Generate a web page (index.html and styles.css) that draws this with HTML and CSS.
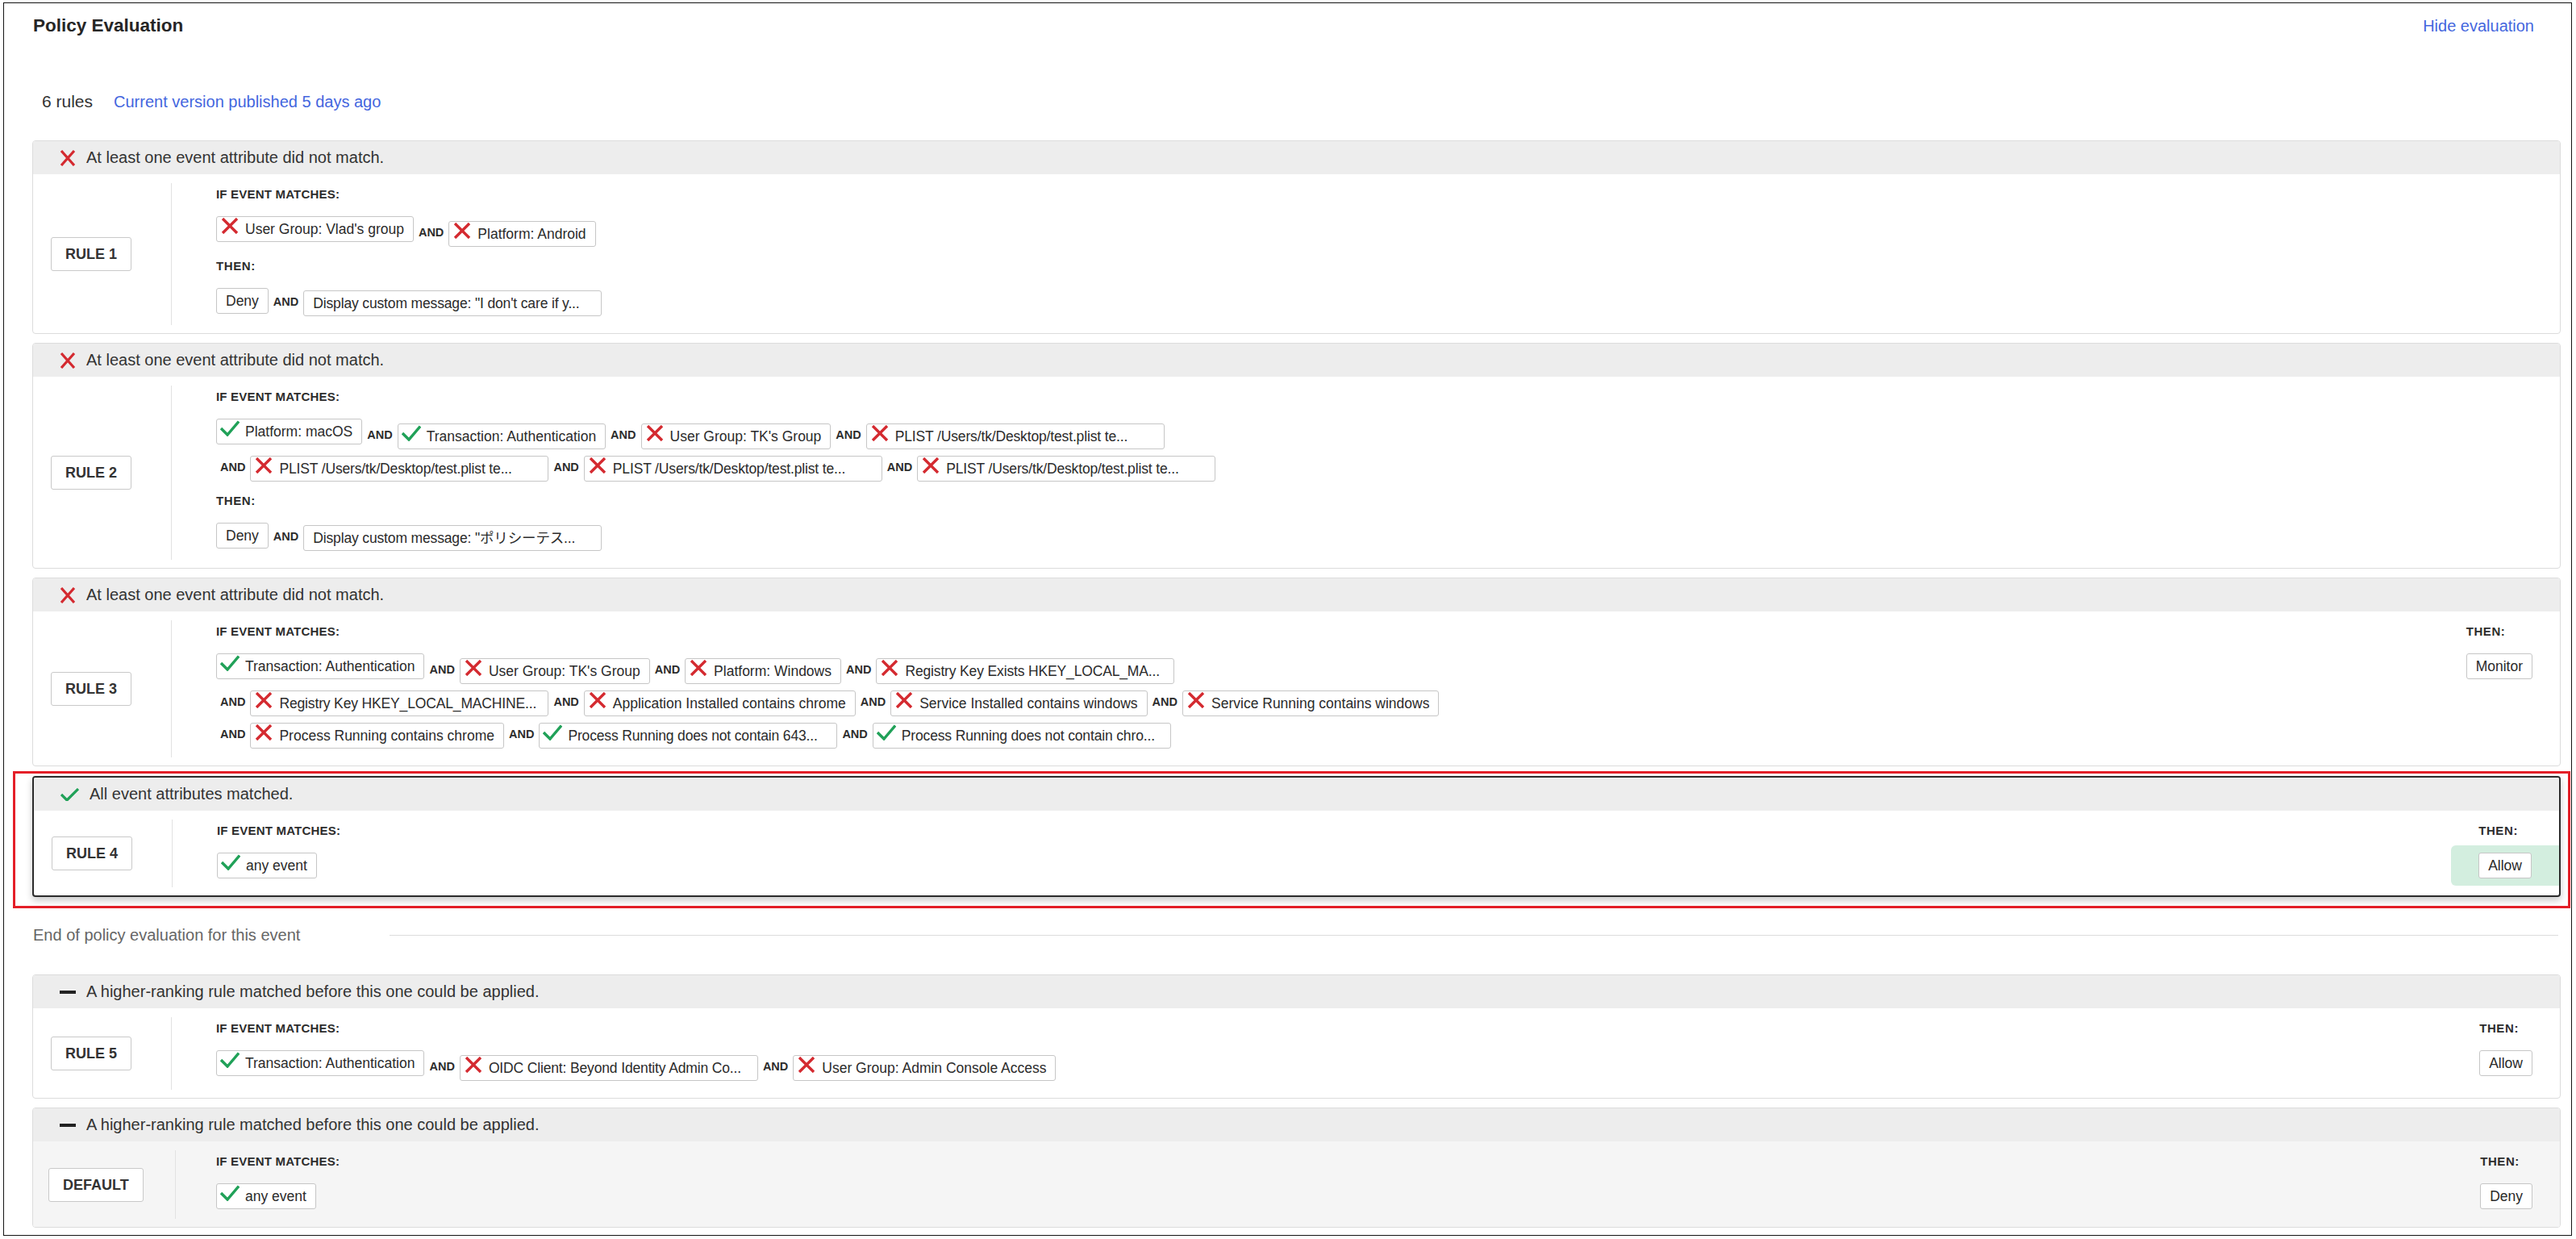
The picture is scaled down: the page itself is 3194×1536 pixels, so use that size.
FILE: index.html
```html
<!DOCTYPE html>
<html lang="en">
<head>
<meta charset="utf-8">
<title>Policy Evaluation</title>
<link rel="stylesheet" href="styles.css">
</head>
<body>
<svg class="defs" aria-hidden="true">
  <symbol id="i-x" viewBox="0 0 24 20"><path d="M3 1 L21 19 M21 1 L3 19" fill="none" stroke="#d42a30" stroke-width="3.4"/></symbol>
  <symbol id="i-ok" viewBox="0 0 24 20"><path d="M1 10 L9 18 L23 1.5" fill="none" stroke="#20a158" stroke-width="3.4"/></symbol>
  <symbol id="h-x" viewBox="0 0 20 20"><path d="M2 1 L18 19 M18 1 L2 19" fill="none" stroke="#d42a30" stroke-width="3.2"/></symbol>
  <symbol id="h-ok" viewBox="0 0 23 16"><path d="M1 8 L8 15 L22 1" fill="none" stroke="#20a158" stroke-width="3.2"/></symbol>
  <symbol id="h-dash" viewBox="0 0 20 4"><rect width="20" height="4" fill="#222"/></symbol>
</svg>

<div class="frame">
  <div class="title-row">
    <h1 class="title">Policy Evaluation</h1>
    <a class="link hide-link" href="#">Hide evaluation</a>
  </div>

  <div class="summary">
    <span class="count">6 rules</span>
    <a class="link" href="#">Current version published 5 days ago</a>
  </div>

  <div class="rules">
    <!-- RULE 1 -->
    <section class="rule">
      <div class="rule-head"><svg class="hico hico-x"><use href="#h-x"/></svg><span>At least one event attribute did not match.</span></div>
      <div class="rule-body">
        <div class="rule-left"><span class="rule-tag">RULE 1</span></div>
        <div class="rule-main">
          <div class="label">IF EVENT MATCHES:</div>
          <div class="cond-list">
            <div class="cond-row">
              <span class="chip has-icon"><svg class="ico"><use href="#i-x"/></svg>User Group: Vlad's group</span>
              <span class="group"><span class="and">AND</span><span class="chip has-icon"><svg class="ico"><use href="#i-x"/></svg>Platform: Android</span></span>
            </div>
          </div>
          <div class="label then-label">THEN:</div>
          <div class="cond-list action-list">
            <div class="cond-row">
              <span class="chip">Deny</span>
              <span class="group"><span class="and">AND</span><span class="chip chip--clip">Display custom message: "I don't care if y...</span></span>
            </div>
          </div>
        </div>
      </div>
    </section>

    <!-- RULE 2 -->
    <section class="rule">
      <div class="rule-head"><svg class="hico hico-x"><use href="#h-x"/></svg><span>At least one event attribute did not match.</span></div>
      <div class="rule-body">
        <div class="rule-left"><span class="rule-tag">RULE 2</span></div>
        <div class="rule-main">
          <div class="label">IF EVENT MATCHES:</div>
          <div class="cond-list">
            <div class="cond-row">
              <span class="chip has-icon"><svg class="ico"><use href="#i-ok"/></svg>Platform: macOS</span>
              <span class="group"><span class="and">AND</span><span class="chip has-icon"><svg class="ico"><use href="#i-ok"/></svg>Transaction: Authentication</span></span>
              <span class="group"><span class="and">AND</span><span class="chip has-icon"><svg class="ico"><use href="#i-x"/></svg>User Group: TK's Group</span></span>
              <span class="group"><span class="and">AND</span><span class="chip has-icon chip--clip"><svg class="ico"><use href="#i-x"/></svg>PLIST /Users/tk/Desktop/test.plist te...</span></span>
            </div>
            <div class="cond-row">
              <span class="group"><span class="and">AND</span><span class="chip has-icon chip--clip"><svg class="ico"><use href="#i-x"/></svg>PLIST /Users/tk/Desktop/test.plist te...</span></span>
              <span class="group"><span class="and">AND</span><span class="chip has-icon chip--clip"><svg class="ico"><use href="#i-x"/></svg>PLIST /Users/tk/Desktop/test.plist te...</span></span>
              <span class="group"><span class="and">AND</span><span class="chip has-icon chip--clip"><svg class="ico"><use href="#i-x"/></svg>PLIST /Users/tk/Desktop/test.plist te...</span></span>
            </div>
          </div>
          <div class="label then-label">THEN:</div>
          <div class="cond-list action-list">
            <div class="cond-row">
              <span class="chip">Deny</span>
              <span class="group"><span class="and">AND</span><span class="chip chip--clip">Display custom message: "ポリシーテス...</span></span>
            </div>
          </div>
        </div>
      </div>
    </section>

    <!-- RULE 3 -->
    <section class="rule">
      <div class="rule-head"><svg class="hico hico-x"><use href="#h-x"/></svg><span>At least one event attribute did not match.</span></div>
      <div class="rule-body">
        <div class="rule-left"><span class="rule-tag">RULE 3</span></div>
        <div class="rule-main">
          <div class="label">IF EVENT MATCHES:</div>
          <div class="cond-list">
            <div class="cond-row">
              <span class="chip has-icon"><svg class="ico"><use href="#i-ok"/></svg>Transaction: Authentication</span>
              <span class="group"><span class="and">AND</span><span class="chip has-icon"><svg class="ico"><use href="#i-x"/></svg>User Group: TK's Group</span></span>
              <span class="group"><span class="and">AND</span><span class="chip has-icon"><svg class="ico"><use href="#i-x"/></svg>Platform: Windows</span></span>
              <span class="group"><span class="and">AND</span><span class="chip has-icon chip--clip"><svg class="ico"><use href="#i-x"/></svg>Registry Key Exists HKEY_LOCAL_MA...</span></span>
            </div>
            <div class="cond-row">
              <span class="group"><span class="and">AND</span><span class="chip has-icon chip--clip"><svg class="ico"><use href="#i-x"/></svg>Registry Key HKEY_LOCAL_MACHINE...</span></span>
              <span class="group"><span class="and">AND</span><span class="chip has-icon"><svg class="ico"><use href="#i-x"/></svg>Application Installed contains chrome</span></span>
              <span class="group"><span class="and">AND</span><span class="chip has-icon"><svg class="ico"><use href="#i-x"/></svg>Service Installed contains windows</span></span>
              <span class="group"><span class="and">AND</span><span class="chip has-icon"><svg class="ico"><use href="#i-x"/></svg>Service Running contains windows</span></span>
            </div>
            <div class="cond-row">
              <span class="group"><span class="and">AND</span><span class="chip has-icon"><svg class="ico"><use href="#i-x"/></svg>Process Running contains chrome</span></span>
              <span class="group"><span class="and">AND</span><span class="chip has-icon chip--clip"><svg class="ico"><use href="#i-ok"/></svg>Process Running does not contain 643...</span></span>
              <span class="group"><span class="and">AND</span><span class="chip has-icon chip--clip"><svg class="ico"><use href="#i-ok"/></svg>Process Running does not contain chro...</span></span>
            </div>
          </div>
        </div>
        <div class="rule-right">
          <div class="label then-label">THEN:</div>
          <div class="actions"><span class="chip">Monitor</span></div>
        </div>
      </div>
    </section>

    <!-- RULE 4 (matched) -->
    <div class="focus-frame">
      <section class="rule rule--active">
        <div class="rule-head"><svg class="hico hico-ok"><use href="#h-ok"/></svg><span>All event attributes matched.</span></div>
        <div class="rule-body">
          <div class="rule-left"><span class="rule-tag">RULE 4</span></div>
          <div class="rule-main">
            <div class="label">IF EVENT MATCHES:</div>
            <div class="cond-list">
              <div class="cond-row">
                <span class="chip has-icon"><svg class="ico"><use href="#i-ok"/></svg>any event</span>
              </div>
            </div>
          </div>
          <div class="rule-right">
            <div class="label then-label">THEN:</div>
            <div class="actions is-hit"><span class="chip">Allow</span></div>
          </div>
        </div>
      </section>
    </div>

    <div class="end-row">
      <span class="end-text">End of policy evaluation for this event</span>
      <span class="end-line"></span>
    </div>

    <!-- RULE 5 -->
    <section class="rule">
      <div class="rule-head"><svg class="hico hico-dash"><use href="#h-dash"/></svg><span>A higher-ranking rule matched before this one could be applied.</span></div>
      <div class="rule-body">
        <div class="rule-left"><span class="rule-tag">RULE 5</span></div>
        <div class="rule-main">
          <div class="label">IF EVENT MATCHES:</div>
          <div class="cond-list">
            <div class="cond-row">
              <span class="chip has-icon"><svg class="ico"><use href="#i-ok"/></svg>Transaction: Authentication</span>
              <span class="group"><span class="and">AND</span><span class="chip has-icon chip--clip"><svg class="ico"><use href="#i-x"/></svg>OIDC Client: Beyond Identity Admin Co...</span></span>
              <span class="group"><span class="and">AND</span><span class="chip has-icon"><svg class="ico"><use href="#i-x"/></svg>User Group: Admin Console Access</span></span>
            </div>
          </div>
        </div>
        <div class="rule-right">
          <div class="label then-label">THEN:</div>
          <div class="actions"><span class="chip">Allow</span></div>
        </div>
      </div>
    </section>

    <!-- DEFAULT -->
    <section class="rule rule--default">
      <div class="rule-head"><svg class="hico hico-dash"><use href="#h-dash"/></svg><span>A higher-ranking rule matched before this one could be applied.</span></div>
      <div class="rule-body">
        <div class="rule-left"><span class="rule-tag">DEFAULT</span></div>
        <div class="rule-main">
          <div class="label">IF EVENT MATCHES:</div>
          <div class="cond-list">
            <div class="cond-row">
              <span class="chip has-icon"><svg class="ico"><use href="#i-ok"/></svg>any event</span>
            </div>
          </div>
        </div>
        <div class="rule-right">
          <div class="label then-label">THEN:</div>
          <div class="actions"><span class="chip">Deny</span></div>
        </div>
      </div>
    </section>
  </div>
</div>
</body>
</html>
```

FILE: styles.css
```css
html, body {
  margin: 0;
  padding: 0;
  overflow: hidden;
  background: #fff;
}

body {
  font-family: "Liberation Sans", "Noto Sans CJK JP", sans-serif;
  color: #2f2f2f;
}

.defs {
  position: absolute;
  width: 0;
  height: 0;
  overflow: hidden;
}

.frame {
  margin: 3px 5px 0 4px;
  border: 1px solid #141414;
  padding: 13px 13px 9px 35px;
}

/* ---------- top ---------- */
.title-row {
  display: flex;
  justify-content: space-between;
  align-items: baseline;
  padding-right: 33px;
}

.title {
  margin: 0;
  padding-left: 1px;
  font-size: 22.5px;
  line-height: 30px;
  font-weight: 700;
  color: #262626;
}

.link {
  color: #4466de;
  text-decoration: none;
}

.hide-link {
  font-size: 20px;
  line-height: 24px;
}

.summary {
  margin-top: 66px;
  padding-left: 12px;
  display: flex;
  align-items: baseline;
  gap: 26px;
  line-height: 26px;
}

.count {
  font-size: 21px;
  color: #333;
}

.summary .link {
  font-size: 20px;
}

/* ---------- rules ---------- */
.rules {
  margin-top: 35px;
}

.rule {
  border: 1px solid #dcdcdc;
  border-radius: 4px;
  background: #fff;
  overflow: hidden;
}

.rule + .rule {
  margin-top: 11px;
}

.rule-head {
  height: 41px;
  background: #ededed;
  display: flex;
  align-items: center;
  gap: 13px;
  padding-left: 33px;
  font-size: 20px;
  color: #333;
}

.hico { flex: none; }
.hico-x { width: 20px; height: 20px; }
.hico-ok { width: 23px; height: 16px; }
.hico-dash { width: 20px; height: 4px; }

.rule-body {
  display: flex;
  padding: 11px 0 10px;
}

.rule-left {
  flex: none;
  width: 172px;
  box-sizing: border-box;
  padding-left: 22px;
  display: flex;
  align-items: center;
  border-right: 1px solid #e2e2e2;
}

.rule-tag {
  display: inline-block;
  height: 40px;
  line-height: 40px;
  padding: 0 17px;
  border: 1px solid #c9c9c9;
  border-radius: 3px;
  background: #fff;
  font-size: 18px;
  font-weight: 700;
  color: #333;
}

.rule-main {
  flex: 1;
  min-width: 0;
  padding: 4px 0 11px 55px;
}

.label {
  font-size: 15px;
  line-height: 20px;
  font-weight: 700;
  letter-spacing: 0.2px;
  color: #2d2d2d;
}

.then-label {
  letter-spacing: 0.6px;
}

.label + .cond-list {
  margin-top: 17px;
}

.cond-list + .label {
  margin-top: 14px;
}

.cond-list {
  display: flex;
  flex-direction: column;
  gap: 2px;
}

.cond-row {
  display: flex;
  align-items: flex-start;
}

.chip {
  display: inline-block;
  box-sizing: border-box;
  height: 32px;
  line-height: 30px;
  padding: 0 11px;
  border: 1px solid #c6c6c6;
  border-radius: 3px;
  background: #fff;
  font-size: 17.5px;
  color: #2b2b2b;
  white-space: nowrap;
}

.chip.has-icon {
  padding-left: 4px;
}

.ico {
  width: 24px;
  height: 20px;
  vertical-align: baseline;
  margin-right: 7px;
}

.chip--clip {
  width: 370px;
  overflow: hidden;
  text-overflow: ellipsis;
  letter-spacing: -0.15px;
  padding-right: 8px;
}

.group {
  display: flex;
  align-items: center;
  gap: 6px;
  margin-left: 6px;
  padding-top: 6px;
}

.cond-row > .group:first-child {
  margin-left: 5px;
}

.action-list .group {
  padding-top: 3px;
}

.and {
  font-size: 14.5px;
  line-height: 16px;
  font-weight: 700;
  color: #2d2d2d;
  margin-bottom: 4px;
}

.rule-right {
  flex: none;
  padding-top: 4px;
}

.rule-right .label {
  padding-left: 34px;
}

.actions {
  margin-top: 8px;
  padding: 9px 34px;
  border-radius: 6px 0 0 6px;
}

.actions.is-hit {
  background: #d3eedf;
}

/* ---------- highlighted rule ---------- */
.focus-frame {
  border: 3px solid #e41f28;
  margin: 6px -12px 0 -24px;
  padding: 3px 9px 11px 21px;
}

.rule--active {
  border: 2px solid #2b2b2b;
  box-shadow: 0 4px 8px rgba(0, 0, 0, 0.22);
}

/* ---------- end divider ---------- */
.end-row {
  display: flex;
  align-items: center;
  margin: 21px 0 37px;
}

.end-text {
  padding-left: 1px;
  font-size: 20px;
  line-height: 24px;
  color: #666;
}

.end-line {
  flex: 1;
  height: 1px;
  background: #dcdcdc;
  margin: 0 3px 0 111px;
}

/* ---------- default rule ---------- */
.rule--default .rule-body {
  background: #f5f5f5;
}

.rule--default .rule-left {
  width: 177px;
  padding-left: 19px;
}

.rule--default .rule-main {
  padding-left: 50px;
  padding-bottom: 12px;
}
```
